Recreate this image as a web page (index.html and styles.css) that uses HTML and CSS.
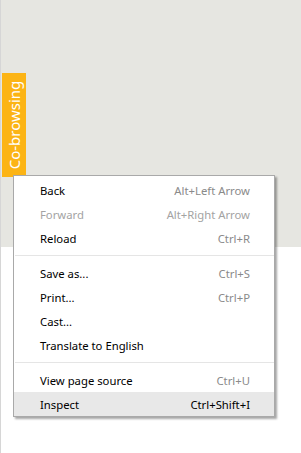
FILE: index.html
```html
<!DOCTYPE html>
<html lang="en">

<head>
    <meta charset="UTF-8">
    <meta name="viewport" content="width=device-width, initial-scale=1.0">
    <title>Context Menu</title>
    <link rel="stylesheet" href="styles.css">
</head>

<body>
    <div class="page">
        <div class="top-area"></div>
    </div>

    <!-- Co-browsing side tab -->
    <div class="cobrowse-tab">
        <span>Co-browsing</span>
    </div>

    <!-- Right click menu -->
    <ul class="context-menu">
        <li class="menu-item"><span>Back</span><span class="shortcut">Alt+Left Arrow</span></li>
        <li class="menu-item disabled"><span>Forward</span><span class="shortcut">Alt+Right Arrow</span></li>
        <li class="menu-item"><span>Reload</span><span class="shortcut">Ctrl+R</span></li>
        <li class="separator"></li>
        <li class="menu-item"><span>Save as...</span><span class="shortcut">Ctrl+S</span></li>
        <li class="menu-item"><span>Print...</span><span class="shortcut">Ctrl+P</span></li>
        <li class="menu-item"><span>Cast...</span></li>
        <li class="menu-item"><span>Translate to English</span></li>
        <li class="separator"></li>
        <li class="menu-item"><span>View page source</span><span class="shortcut">Ctrl+U</span></li>
        <li class="menu-item active"><span>Inspect</span><span class="shortcut">Ctrl+Shift+I</span></li>
    </ul>
</body>

</html>
```

FILE: styles.css
```css
/* Reset Styles */
* {
    margin: 0;
    padding: 0;
    box-sizing: border-box;
}

body {
    font-family: "Noto Sans", "Open Sans", sans-serif;
    background-color: #fff;
    width: 301px;
    height: 453px;
    overflow: hidden;
    position: relative;
}

/* Page */
.page {
    height: 453px;
    border-left: 1px solid #d6d6d6;
}

.top-area {
    height: 247px;
    background-color: #e6e6e1;
}

/* Side tab */
.cobrowse-tab {
    position: absolute;
    left: 2px;
    top: 73px;
    width: 24px;
    height: 104px;
    background-color: #fcb415;
    display: flex;
    align-items: center;
    justify-content: center;
}

.cobrowse-tab span {
    color: #fff;
    font-size: 15px;
    white-space: nowrap;
    transform: rotate(-90deg);
}

/* Context menu */
.context-menu {
    position: absolute;
    left: 13px;
    top: 175px;
    width: 262px;
    list-style: none;
    background: #fff;
    border: 1px solid #a9a9a9;
    padding: 2px 0 0;
    box-shadow: 2px 2px 2px rgba(0, 0, 0, 0.35);
    font-size: 11.3px;
    color: #000;
}

.menu-item {
    display: flex;
    justify-content: space-between;
    height: 24px;
    line-height: 22px;
    padding: 2px 24px 0 26px;
}

.shortcut {
    color: #8a8a8a;
}

.disabled,
.disabled .shortcut {
    color: #a3a3a3;
}

.active {
    background-color: #e8e8e8;
}

.active .shortcut {
    color: #000;
}

.separator {
    height: 1px;
    margin: 5px 0 5px 1px;
    background-color: #e5e5e5;
}
```
